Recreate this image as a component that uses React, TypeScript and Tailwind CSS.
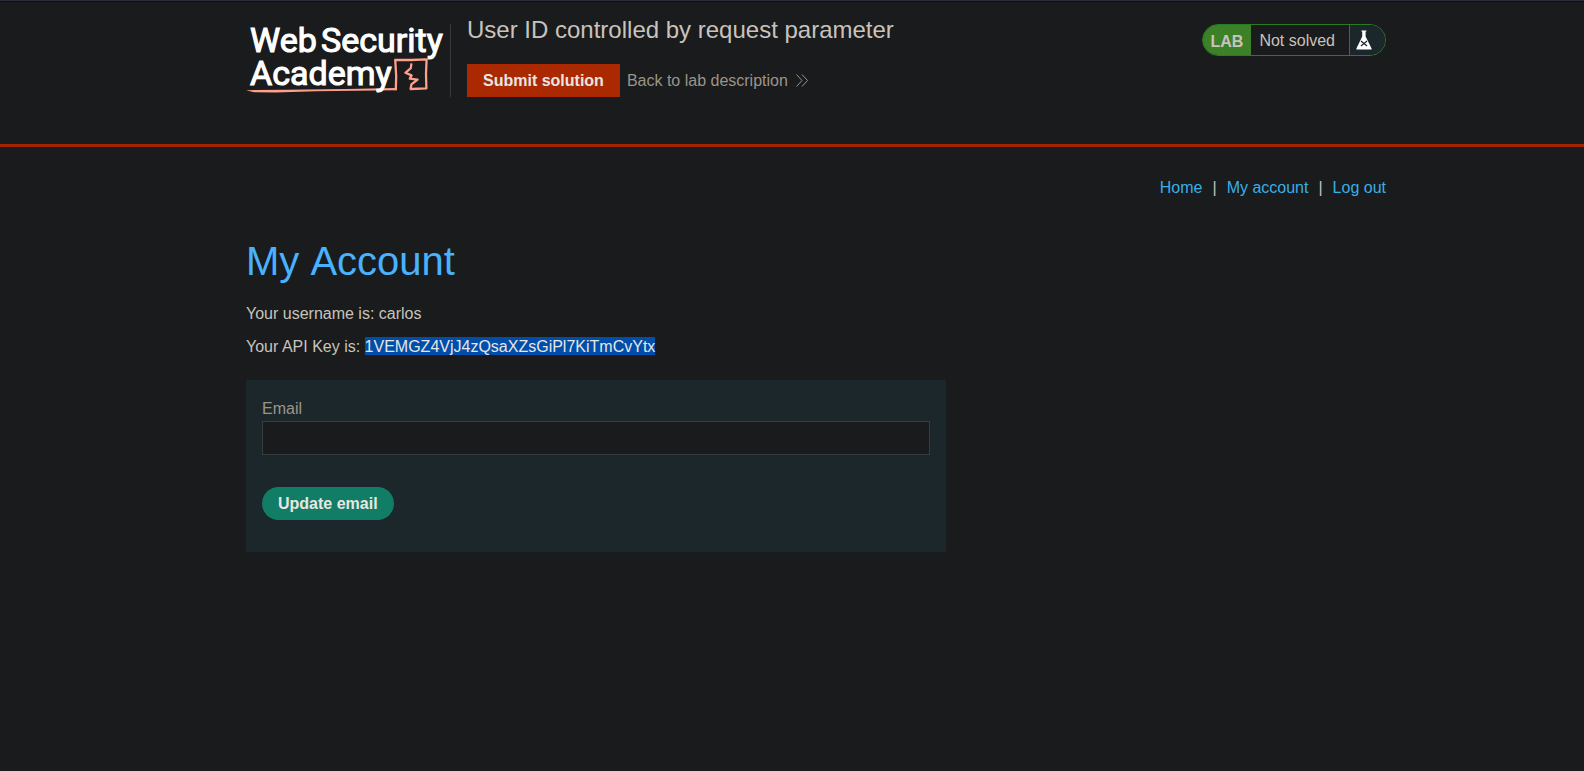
import React from "react";

function AcademyLogo() {
  return (
    <svg width="200" height="73" viewBox="0 0 200 73" role="img" aria-label="Web Security Academy" className="block overflow-visible">
      <path d="M0 66.2 L40 65.8 L100 65 L148.8 64 L150.8 66.2 L110 66.8 L70 67.2 L30 68.6 L8 68.2 Z" fill="#ff9f8c" />
      <path
        d="M149.8 66.2 L150.2 52 L149.2 35.8 L165 36 L180.6 35.4 L180 50 L180.4 64.4 L164.6 65 L165.4 60.4 L171.6 55.6 L163.8 54.6 L165.6 51.4 L159.4 48.8 L164.8 44.2 L165.4 39.4"
        fill="none"
        stroke="#ff9f8c"
        strokeWidth="2.3"
        strokeLinejoin="round"
      />
      <g
        fill="#ffffff"
        stroke="#ffffff"
        strokeWidth="1.1"
        className="font-['Roboto',sans-serif] text-[34px] font-normal"
      >
        <text x="4" y="28">Web</text>
        <text x="75" y="28">Security</text>
        <text x="4" y="61">Academy</text>
      </g>
    </svg>
  );
}

function FlaskIcon() {
  return (
    <svg width="16" height="20" viewBox="0 0 16 20" aria-hidden="true" className="block shrink-0">
      <path d="M5.4 0.6 h5 v1 h-0.8 v5 L15.6 18.6 V19.4 H0.4 V18.6 L6.2 6.6 V1.6 h-0.8 Z" fill="#ffffff" />
      <path d="M5 11 l6 5 M11 11 l-6 5" stroke="#1c272b" strokeWidth="1.2" />
    </svg>
  );
}

function LabStatus() {
  return (
    <div className="flex h-8 items-stretch overflow-hidden rounded-full border border-[#2a7a26] text-base">
      <span className="flex items-center bg-[#3c8128] px-2 pt-1 font-bold">LAB</span>
      <span className="flex items-center pt-0.5 pr-3.5 pl-2">Not solved</span>
      <span className="flex items-center border-l border-[#2a7a26] bg-[#1c272b] pr-[13px] pl-1.5">
        <FlaskIcon />
      </span>
    </div>
  );
}

export default function App() {
  return (
    <div className="min-h-screen border-t border-[#2b2b38] bg-[#191b1c] font-['Liberation_Sans',Arial,sans-serif] text-base text-[#c8c3bc]">
      <header className="border-t border-b-3 border-t-[#0f1011] border-b-[#a32500] pt-3.5 pb-[47px]">
        <div className="mx-auto flex w-3/4 items-start pl-12">
          <div className="mt-2 border-r border-[#35393b] pr-1">
            <AcademyLogo />
          </div>
          <div className="flex-1 pl-4">
            <h2 className="text-2xl leading-7">User ID controlled by request parameter</h2>
            <div className="mt-5 flex items-center gap-[7px]">
              <button type="button" className="h-[33px] bg-[#ab2900] px-4 font-bold text-[#e8e6e3]">
                Submit solution
              </button>
              <a href="#description" className="flex items-center gap-2 text-[#9d9488]">
                Back to lab description
                <svg width="12" height="13" viewBox="0 0 12 13" fill="none" stroke="currentColor" aria-hidden="true">
                  <path d="M0.5 0.5 L6 6.5 L0.5 12.5 M6 0.5 L11.5 6.5 L6 12.5" strokeWidth="1" />
                </svg>
              </a>
            </div>
          </div>
          <div className="mt-2">
            <LabStatus />
          </div>
        </div>
      </header>

      <main className="mx-auto w-3/4 pt-[31px] pl-12">
        <nav className="flex justify-end gap-2.5 leading-5">
          <a href="#home" className="text-[#3aaee8]">Home</a>
          <span>|</span>
          <a href="#account" className="text-[#3aaee8]">My account</a>
          <span>|</span>
          <a href="#logout" className="text-[#3aaee8]">Log out</a>
        </nav>
        <h1 className="mt-[39px] text-[40px] leading-[48px] text-[#48b2ff] [font-kerning:none]">My Account</h1>
        <p className="mt-3 leading-[33px]">Your username is: carlos</p>
        <p className="leading-[33px]">
          Your API Key is: <span className="bg-[#004daa] pt-px text-[#e8e6e3]">1VEMGZ4VjJ4zQsaXZsGiPl7KiTmCvYtx</span>
        </p>
        <form className="mt-[17px] w-full max-w-[700px] bg-[#1c272b] p-4 pb-8" onSubmit={(e) => e.preventDefault()}>
          <label htmlFor="email" className="block leading-[25px] text-[#9d9488]">Email</label>
          <input
            id="email"
            type="email"
            className="block h-[34px] w-full border border-[#373c3e] bg-[#191b1c] px-2 outline-none"
          />
          <button type="submit" className="mt-8 block h-[33px] rounded-full bg-[#127d66] px-4 font-bold text-[#e8e6e3]">
            Update email
          </button>
        </form>
      </main>
    </div>
  );
}
